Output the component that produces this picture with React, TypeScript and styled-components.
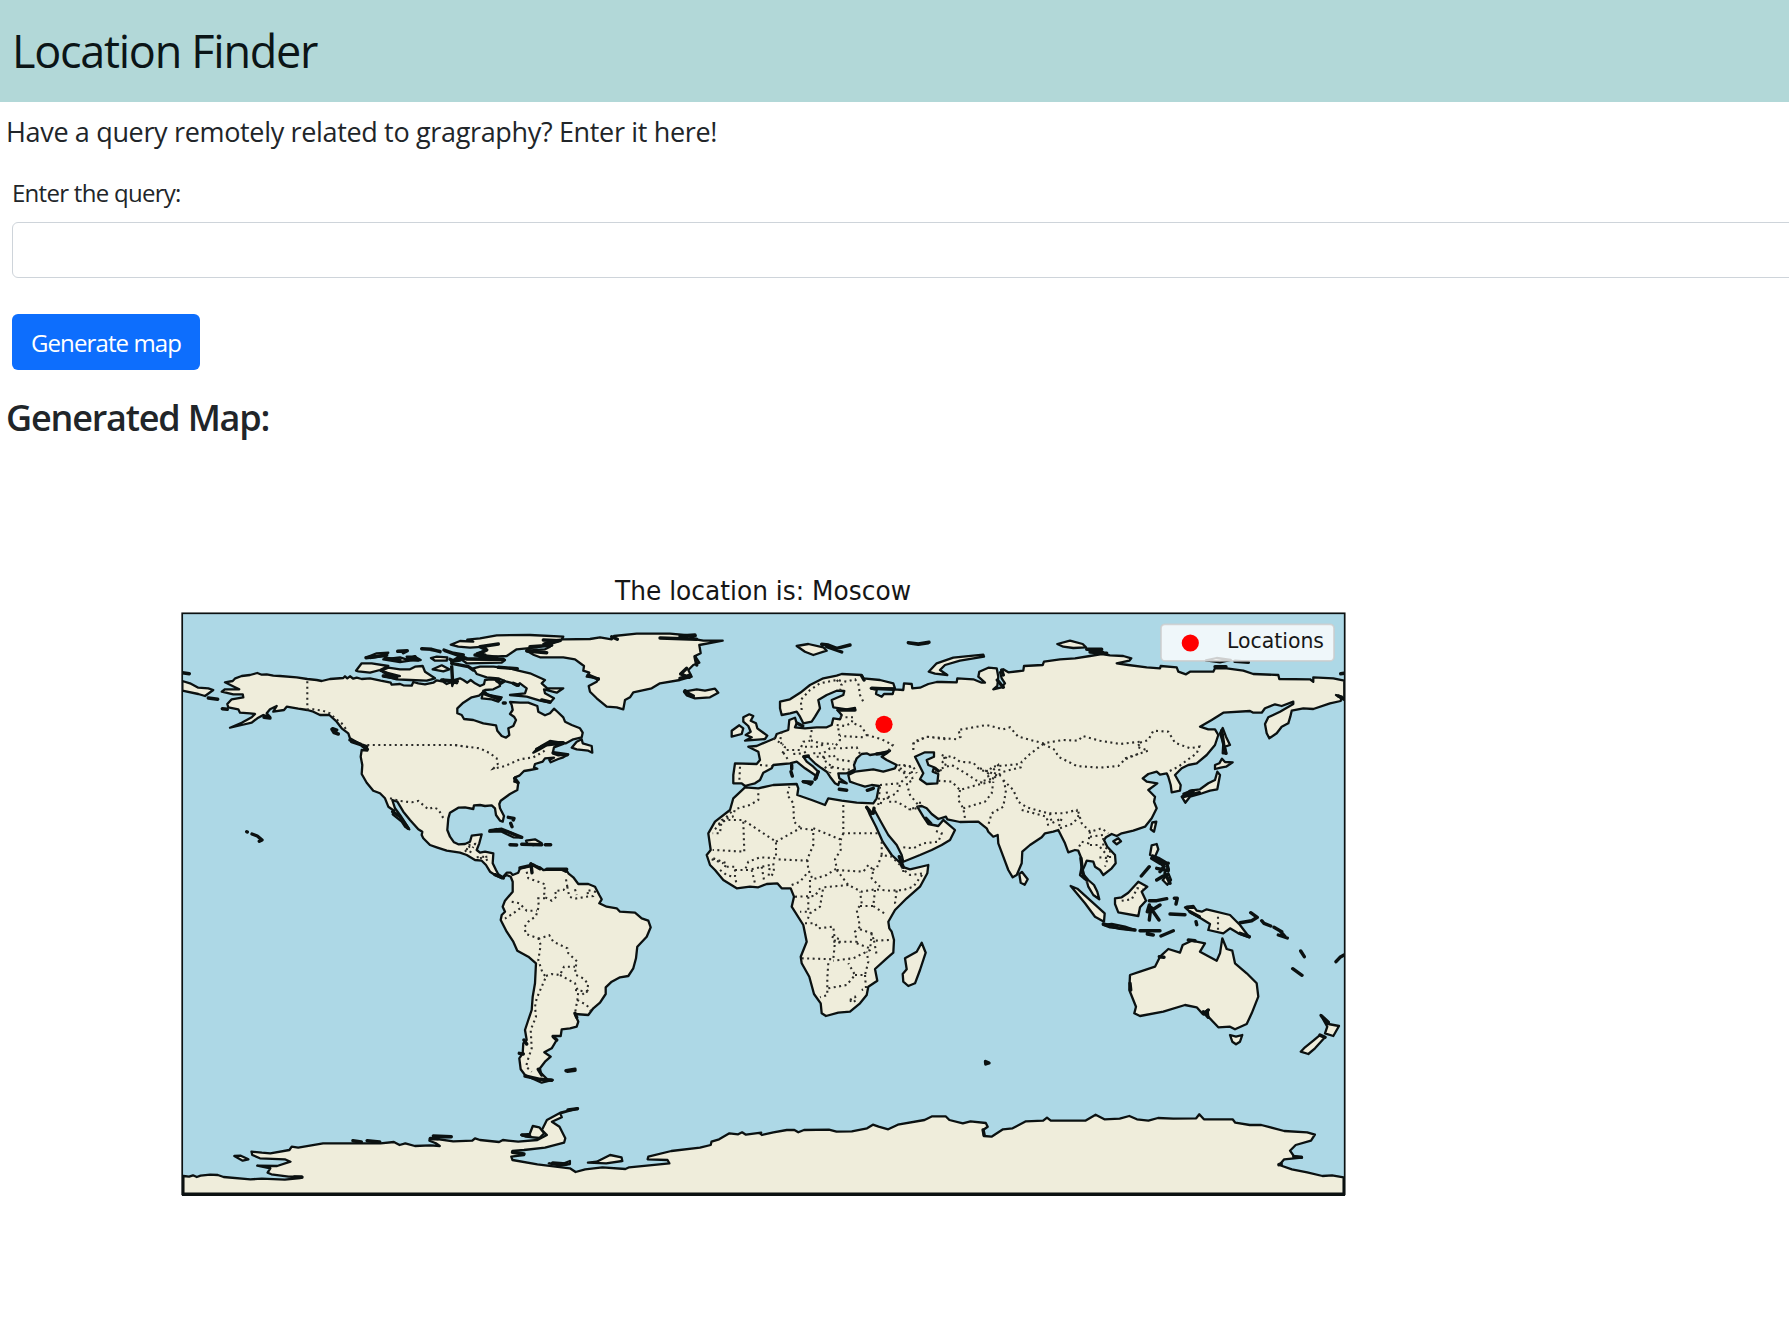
import React from "react";
import styled, { createGlobalStyle } from "styled-components";

const GlobalStyle = createGlobalStyle`
  *, *::before, *::after { box-sizing: border-box; }
  body {
    margin: 0;
    background: #fff;
    color: #212529;
    font-family: "Segoe UI", "Open Sans", "Noto Sans", sans-serif;
    overflow: hidden;
  }
`;

const Page = styled.main`
  display: flex;
  flex-direction: column;
  min-height: 1336px;
  overflow: hidden;
`;

const Header = styled.header`
  display: flex;
  align-items: center;
  height: 102px;
  padding: 0 12px;
  background: #b2d8d8;
`;

const Title = styled.h1`
  margin: 0;
  font-size: 45px;
  font-weight: 400;
  line-height: 54px;
  letter-spacing: -1.28px;
  color: #0b1517;
`;

const Lead = styled.p`
  margin: 10px 0 0 6px;
  font-size: 27px;
  line-height: 40px;
  letter-spacing: -0.34px;
`;

const QueryForm = styled.form`
  display: flex;
  flex-direction: column;
  align-items: flex-start;
  width: 1830px;
  padding: 23px 12px 0;
`;

const Label = styled.label`
  font-size: 24px;
  line-height: 36px;
  letter-spacing: -0.72px;
`;

const QueryInput = styled.input`
  width: 100%;
  height: 56px;
  margin-top: 11px;
  padding: 9px 18px;
  border: 1.5px solid #ced4da;
  border-radius: 6px;
  background: #fff;
  font: inherit;
  font-size: 24px;
`;

const SubmitButton = styled.button`
  width: 188px;
  height: 56px;
  margin-top: 36px;
  padding: 1px 0 0;
  border: 0;
  border-radius: 6px;
  background: #0d6efd;
  color: #fff;
  font-family: inherit;
  font-size: 24px;
  letter-spacing: -0.88px;
  white-space: nowrap;
`;

const SectionHeading = styled.h2`
  margin: 26px 0 0 6px;
  font-size: 36px;
  font-weight: 600;
  line-height: 43px;
  letter-spacing: -1.2px;
`;

const Figure = styled.figure`
  margin: 125px 0 0 160px;
`;

const MapSvg = styled.svg`
  display: block;
  text {
    font-family: "DejaVu Sans", sans-serif;
    fill: #161616;
  }
`;

const Coast = styled.path`
  fill: #efeddb;
  stroke: #0b1111;
  stroke-width: 2.3;
  stroke-linejoin: round;
`;
const Sea = styled(Coast)`
  fill: #add8e6;
`;
const Islet = styled.path`
  fill: none;
  stroke: #0b1111;
  stroke-width: 3.4;
  stroke-linecap: round;
  stroke-linejoin: round;
`;
const Border = styled.path`
  fill: none;
  stroke: #2b2b28;
  stroke-width: 2.1;
  stroke-dasharray: 2 3.5;
`;

/* The coastline is digitised in sheets, each with its own origin and scale. */
type Sheet = (points: string) => string;
const sheet =
  (ox: number, oy: number, sx = 3, sy = 3): Sheet =>
  (points) =>
    points
      .trim()
      .split(/\s+/)
      .map((p) => {
        const [x, y] = p.split(",").map(Number);
        return `${(ox + x / sx).toFixed(1)},${(oy + y / sy).toFixed(1)}`;
      })
      .join(" ");

const NW = sheet(170, 600);
const NA = sheet(430, 600);
const SA = sheet(460, 840);
const EU = sheet(680, 620);
const AF = sheet(690, 770);
const AS = sheet(860, 610);
const FE = sheet(1100, 600);
const OC = sheet(1060, 820);
const S1 = sheet(170, 1080, 2.6133);
const S2 = sheet(760, 1080, 2.6133);

const closed = (...parts: string[]) => `M${parts.join(" ")}Z`;
const shapes = (s: Sheet, list: string[]) => list.map((p) => `M${s(p)}Z`).join("");
const lines = (s: Sheet, list: string[]) => list.map((p) => `M${s(p)}`).join("");

const americas = closed(
  NW(`165,247 188,243 196,235 215,228 240,225 262,219 275,224 290,223 310,227 330,228 380,232 412,237 440,240 455,243 480,237 520,234
      525,229 532,235 540,229 550,236 560,233 575,237 600,235 632,242 662,248 665,254 690,252 700,256 725,257 730,246 745,250 765,253 790,248 800,241 820,245 830,252 845,246`),
  NA(`67,258 72,240 90,235 100,240 112,248 122,240 135,250 150,258 162,253 165,240 180,238 208,240 210,258 190,268 165,270
      155,280 147,287 125,292 100,308 82,325 82,340 95,345 102,357 130,360 160,370 198,376 202,392 215,408 228,413 238,405
      235,385 250,378 258,360 252,350 240,342 248,330 245,315 240,306 270,308 295,308 322,318 325,335 345,346 360,340 372,326 383,336 400,352
      405,365 425,375 450,385 458,398 455,412 430,418 408,430 360,423 335,437 318,450 310,458 330,448 350,436 385,432 400,432
      372,442 368,460 385,466 415,463 400,472 385,477 362,487 358,480 372,473 345,475 338,485 315,492 312,502 322,506 300,510 282,513 268,527 255,532 253,545
      265,548 262,570 240,582 212,602 208,612 210,625 222,648 218,665 210,662 198,645 195,625 185,616 165,618 150,615 132,616 130,627 105,622
      85,623 60,638 55,655 52,690 60,710 72,727 85,733 105,732 120,725 125,707 155,703 148,730 140,750 150,758 165,755 190,760`),
  SA(`100,42 98,70 108,90 115,103 128,112 140,98 152,98 158,105 175,98 180,85 210,78 212,70 225,78 240,82 250,90 275,88 318,88
      325,100 340,112 355,132 385,132 405,140 418,165 425,178 418,190 440,200 470,205 480,215 525,218 545,235 565,242 572,262
      560,290 532,320 528,355 520,385 505,408 480,412 455,425 437,442 437,462 420,488 400,505 385,525 345,522 355,545 350,560
      330,565 305,568 302,588 278,588 290,600 275,625 253,637 272,650 255,665 240,685 242,698 262,718 278,720 245,728 215,715
      195,705 182,688 178,655 188,640 190,610 200,600 195,570 205,540 215,510 218,470 225,430 228,370 205,350 172,332 160,305
      140,275 122,240 125,225 135,215 128,200 135,182 158,155 158,125 152,110 140,105 125,115 105,105 90,95 78,75 65,62 45,60 20,45 0,38`),
  NA(`70,755 50,752 20,742 0,735`),
  NW(`760,715 755,705 757,695 745,688 720,660 700,635 682,605 667,600 675,625 690,645 705,668 718,688 705,680 695,665 668,643 672,632
      655,620 645,595 630,580 610,572 590,548 575,522 577,495 572,470 575,450 592,452 570,432 540,415 535,400 515,385 500,365
      478,345 450,345 430,335 412,330 385,326 350,320 342,330 310,335 320,318 300,328 290,340 300,350 280,345 262,355 245,368
      215,375 180,383 215,368 245,352 255,342 240,340 210,338 205,328 175,322 172,312 185,298 220,292 218,283 190,283 155,275
      165,268 208,268 192,260`)
);

const afroEurasia = closed(
  EU(`300,245 330,238 365,215 390,195 430,175 470,167 485,162 545,165 550,175 600,180 640,190 645,205 625,205 572,205 590,210 588,222 605,230
      612,222 638,222 642,208 670,210 672,190 695,192 697,205 720,203 745,192 770,186`),
  AS(`245,216 290,217 292,205 340,208 365,218 375,218 355,200 358,185 385,173 410,175 415,200 412,228 400,238 425,232 435,220
      425,205 420,187 430,178 445,187 490,182 492,168 548,165 552,155 600,148 645,145 690,138 725,132`),
  FE(`30,166 70,168 94,175 88,182 50,190 85,195 140,202 180,205 182,198 230,202 235,215 258,223 270,215 340,215 345,205 380,205
      430,212 460,222 535,225 538,237 630,238 640,245 640,232 700,235 733,242 733,300 708,285 725,290 722,303 690,310 640,327
      610,325 575,332 571,350 565,370 545,380 530,400 508,415 500,400 495,372 505,352 540,335 580,312 580,305 545,318 525,313
      495,325 485,338 460,338 450,333 370,338 335,360 300,380 325,388 345,388 355,405 345,435 320,465 290,490 265,495 245,505
      225,525 242,555 240,572 215,577 212,555 205,530 200,520 180,524 170,515 145,522 128,535 140,545 172,550 145,570 165,590
      162,605 170,625 155,655 135,680 100,692 65,700 50,708 35,702 18,712`),
  OC(`132,60 142,80 165,105 167,130 155,145 130,165 120,150 105,140 100,125 80,122 75,135 68,150 72,165 85,180 102,195 112,215 118,238
      100,225 85,200 80,182 60,165 65,140 62,110 55,92 45,90 25,97 15,70`),
  AS(`605,680 595,660 580,665 555,670 545,682 510,705 487,725 485,760 470,795 458,802 445,780 430,740 415,700 413,675 400,680 385,665
      380,655 355,635 300,636 262,628 258,620 235,627 215,612 200,595 185,588 172,590 190,620 205,642 235,648 250,630 262,640
      285,660 270,690 245,705 215,720 180,735 130,755 125,735 110,705 85,675 65,640 45,603 35,612 20,592 30,615 48,650 68,695 95,735 120,758`),
  AF(`635,290 660,298 715,285 712,310 690,350 650,385 615,420 595,455 598,475 605,485 612,510 610,548 590,565 555,597 562,632 535,650 530,675
      510,700 480,725 445,728 408,738 395,730 392,700 372,672 358,620 335,580 332,560 350,515 340,465 305,410 312,380 302,355
      275,355 262,340 230,342 205,352 180,350 140,355 100,330 75,300 60,285 50,255 62,240 55,190 75,155 120,120 130,85 165,52
      205,55 250,45 320,42 325,55 322,75 365,90 405,105 415,85 455,92 500,98 550,100 560,85 567,48`),
  EU(`575,495 555,500 530,492 510,485 505,465 525,455 580,448 610,455 645,445 650,435 620,420 605,410 630,392 600,400 570,405
      560,400 545,402 530,415 522,435 525,448 500,460 475,460 478,475 500,490 478,485 475,495 465,490 450,470 440,455 425,445
      405,430 385,410 370,410 380,425 400,440 415,455 410,475 405,465 375,445 350,425 330,430 310,432 280,435 275,445 250,458
      240,480 225,490 205,495 195,498 185,490 160,490 160,465 165,430 230,432 240,420 235,395 205,380 230,378 260,365 285,355
      290,342 325,330 328,300 345,293 350,310 345,322 375,325 410,322 440,322 455,315 460,295 480,298 485,285 472,270 525,268 525,264 500,268
      460,262 455,240 490,225 493,213 470,212 440,225 415,240 420,265 405,290 395,305 370,310 360,290 350,275 330,280 305,285 300,265`)
);

const antarctica = closed(
  S1(`35,288 50,290 60,286 70,291 80,287 105,284 125,285 140,291 210,298 240,296 300,299 340,294 345,290 310,290 265,283 255,278 262,265
      228,257 280,258 315,245 300,238 235,235 215,225 213,215 240,218 262,220 312,210 318,200 335,203 400,190 450,190 500,190
      550,190 585,186 600,195 615,190 640,198 680,196 705,198 695,190 678,182 680,174 740,184 790,182 797,175 810,180 860,186
      870,180 910,185 960,180 985,165 972,150 985,120 1020,98 1065,85 1020,100 1024,112 998,125 1018,140 1033,175 1030,188
      980,203 925,210 895,213 925,225 892,230 895,240 960,253 1045,265 1060,276 1085,268 1130,262 1190,267 1200,262 1305,250
      1300,240 1248,238 1250,230 1310,213 1385,203 1413,195 1415,185 1435,178 1462,160 1485,163 1495,157 1505,164 1545,158`),
  S2(`0,160 5,165 35,157 70,150 90,150 100,157 115,150 180,149 200,155 240,154 280,145 295,134 310,140 335,148 360,134 430,120
      450,109 485,109 495,120 530,130 550,124 590,129 595,140 583,150 585,168 605,170 635,148 660,145 695,124 740,122 750,113
      760,122 850,122 877,104 900,118 940,116 965,108 985,118 1015,122 1040,114 1080,116 1140,115 1148,103 1160,118 1235,118
      1242,128 1280,135 1310,135 1370,153 1430,157 1450,164 1440,182 1400,195 1385,212 1395,228 1415,233 1370,238 1357,255 1390,268
      1430,277 1470,288 1495,286 1525,292 1525,341`),
  S1(`35,341`)
);

const islands = [
  shapes(NW, [
    "37,243 60,250 85,263 115,265 130,270 105,288 85,282 37,272",
    "558,212 575,190 605,190 655,198 630,210 600,218 565,214",
    "632,213 655,203 690,208 720,208 735,200 758,198 765,215 795,235 770,242 720,240 680,238 640,228 690,228",
    "590,172 620,160 655,158 640,168 600,174",
    "640,178 690,172 720,182 690,186",
    "710,170 735,170 752,180 720,182",
    "783,174 800,170 832,172 830,182 795,182",
    "788,208 815,196 838,208 820,214",
  ]),
  shapes(NA, [
    "290,152 345,148 360,140 340,132 365,122 400,118 480,117 510,112 545,118 552,108 620,101 720,101 797,108 780,115 820,122 878,122 808,135 812,160 795,168 808,188 790,195 775,210 785,230 750,240 690,250 665,265 610,277 600,292 585,300 580,328 560,322 530,320 500,295 480,275 476,258 500,245 506,235 470,230 478,218 460,212 462,198 435,178 400,172 330,172 312,165",
    "62,134 90,123 130,125 112,119 150,115 200,106 300,105 400,110 392,123 350,135 320,142 260,148 230,168 150,172 140,160 170,150 165,140 120,143 85,140",
    "85,172 110,178 225,180 215,188 110,190",
    "130,205 150,200 190,200 240,205 265,212 300,220 345,240 335,250 352,265 400,265 380,278 342,268 345,280 372,295 360,308 330,302 290,290 240,285 285,280 290,265 270,250 260,257 250,250 230,245 205,235 170,232 140,222",
    "160,272 175,285 215,292 205,305 185,298 155,295",
    "425,443 440,425 455,418 458,430 485,438 487,458 475,452 440,448",
    "178,695 200,687 240,697 275,713 250,712 215,695",
    "288,722 315,718 335,730 310,735 292,732",
  ]),
  shapes(EU, [
    "12,215 50,208 75,212 105,206 115,218 90,232 45,235 20,226",
    "190,292 208,283 220,288 212,302 228,310 232,325 262,347 255,357 195,362 215,352 197,345 212,335 205,318 190,305",
    "155,332 178,316 190,325 185,342 155,350",
    "350,78 385,72 430,82 440,92 400,105 375,95",
    "368,484 398,485 392,494",
  ]),
  shapes(AS, [
    "206,185 230,160 280,143 370,134 372,140 300,152 255,165 240,180 262,195 225,191",
    "592,102 630,92 668,102 678,112 640,114 610,110",
    "478,792 486,786 503,808 494,824 482,818",
  ]),
  shapes(FE, [
    "360,400 368,384 378,410 390,435 375,440 378,460 368,460 370,430",
    "358,490 366,476 375,486 398,487 378,500 362,503 345,507 345,495",
    "352,515 360,525 352,568 330,572 300,582 270,590 256,608 245,590 270,572 300,568 325,550 345,540",
    "152,688 157,667 169,665 162,695",
    "318,181 350,174 392,180 360,187",
  ]),
  shapes(OC, [
    "160,64 175,55 183,64 170,73",
    "275,76 290,72 295,88 285,110 270,105",
    "308,180 325,160 333,180 322,194",
    "165,235 185,232 205,218 235,185 262,200 245,215 258,242 240,262 235,288 175,277 165,252",
    "32,198 52,206 95,245 134,280 132,305 105,290 75,250",
    "130,315 155,312 195,320 225,330 150,322",
    "375,262 400,258 410,272 425,275 440,268 510,285 540,315 568,352 535,340 510,325 490,340 445,330 450,312 415,290 395,280",
    "210,465 240,455 285,440 300,410 325,387 360,398 368,375 395,362 435,370 420,395 470,422 480,400 487,355 500,387 517,392 525,430 560,460 590,490 595,530 575,580 560,612 525,628 510,620 475,622 445,590 443,570 428,582 410,562 375,555 310,575 240,588 223,580 228,560 208,510",
    "510,645 528,650 547,645 540,665 528,673 517,665",
    "782,585 805,612 837,618 820,648 795,640 802,620",
    "778,647 795,652 765,685 745,702 722,695 735,682 760,662",
  ]),
  shapes(AF, ["695,518 707,548 690,600 675,640 655,648 640,635 638,612 650,598 645,565 680,545"]),
  shapes(S1, [
    "168,228 185,227 205,238 190,242",
    "918,165 940,162 948,138 965,142 978,160 965,174 930,170",
    "1092,248 1115,245 1150,225 1180,232 1182,243 1140,250",
    "990,250 1025,252 1045,243 1045,252 1020,257",
  ]),
].join("");

const islets = [
  lines(NW, [
    "37,218 58,221", "115,294 143,298", "157,326 172,328", "282,352 300,354", "486,388 492,398 505,402", "488,386 500,390", "540,420 570,432 592,448", "545,425 590,440",
    "230,695 232,696", "246,702 262,708 276,720 268,724", "683,154 712,152 700,158", "755,146 785,148 810,155", "645,175 690,180", "720,176 745,180",
    "640,228 680,234", "660,225 640,215", "822,150 850,160 880,165", "845,185 870,180", "845,200 848,250", "820,240 860,248", "668,635 690,650 714,685", "588,173 650,165", "735,170 715,178",
  ]),
  lines(NA, [
    "0,148 30,154", "45,152 90,168 70,160 110,176", "110,176 220,178", "205,132 150,140 170,150 150,160 165,165", "90,170 70,182 60,178", "135,165 200,172",
    "340,120 385,122 345,132 365,136 300,140", "290,153 350,158", "690,114 800,118", "545,110 562,118", "770,205 752,222 778,232", "795,170 800,195", "475,225 505,238",
    "205,202 262,206", "220,309 226,309", "235,652 252,655 250,660", "242,670 246,680", "240,734 260,735", "275,733 335,734", "346,734 362,734",
    "270,804 310,795 330,806", "350,808 410,808", "160,280 210,298", "335,300 360,306", "65,190 115,200 130,210", "35,240 82,244", "320,448 360,428 400,428", "370,458 412,464", "254,535 264,548", "765,272 780,284",
    "180,692 215,688 275,712", "200,242 212,250 222,244", "250,250 265,256",
  ]),
  lines(SA, ["213,72 216,98", "305,88 318,94", "192,600 200,612", "318,692 345,688", "322,694 345,691", "195,708 240,718 275,721", "235,688 245,705", "105,104 130,114", "345,520 350,532", "280,590 290,600", "178,640 190,642"]),
  lines(EU, [
    "425,73 445,75 470,85 510,75", "440,80 485,96", "685,68 715,73 745,68", "335,435 335,447", "333,455 337,468", "370,485 395,488", "478,508 500,511", "562,511 580,505",
    "0,48 45,45", "0,175 30,165", "15,215 40,228", "352,310 368,318", "475,270 525,270", "575,205 640,208", "415,455 405,478", "372,410 385,408", "590,402 620,398", "560,562 575,580", "582,565 580,580", "545,168 552,180",
  ]),
  lines(AS, ["145,98 175,102 207,97", "680,118 725,118", "690,126 740,130", "425,180 430,195", "412,210 430,232", "225,475 235,483", "198,625 212,640", "118,740 130,772", "663,745 668,790 675,805"]),
  lines(FE, [
    "345,200 378,200", "405,184 445,187", "722,221 733,220", "148,800 124,828", "158,768 175,775 200,790 205,808", "178,785 192,800 180,815", "170,840 190,828", "185,808 205,812", "195,820 210,850",
    "250,590 298,578", "252,582 280,572", "365,392 372,440 378,460", "715,288 728,295", "0,152 10,158",
  ]),
  lines(OC, [
    "268,242 290,242 320,236", "268,255 262,275", "268,258 280,268 300,255", "272,265 268,300", "280,275 297,300", "343,235 352,235 348,252", "330,282 375,284", "240,332 300,332", "262,342 280,345",
    "303,348 340,332", "408,305 410,314", "380,262 400,262", "390,275 418,290", "540,308 575,302 592,292 572,278", "605,302 612,310 632,318", "642,322 665,335", "655,345 682,354", "662,335 675,350",
    "722,393 733,410", "698,446 726,466", "852,405 840,412 828,425", "784,587 805,607", "430,575 445,592", "445,570 432,582", "298,410 312,412", "540,340 568,350",
    "130,312 180,325 225,330", "275,115 300,130 325,130", "290,145 315,150", "210,490 212,510", "385,360 405,362", "780,645 795,652",
  ]),
  lines(S1, ["478,182 500,186", "515,182 548,186", "688,168 735,170", "895,217 925,222", "325,291 345,292", "1000,249 1035,252", "1040,90 1065,86", "680,176 700,176", "920,165 940,167"]),
  lines(S2, ["583,150 586,166", "1395,230 1415,232", "1356,254 1362,252"]),
].join("");

const borders = [
  lines(NW, ["412,244 412,328 430,328 458,332 480,340 495,355 515,370 530,390", "592,435 855,435 900,442", "660,595 690,603 725,607 745,603 775,628 790,622 805,628 822,658"]),
  lines(NA, ["75,436 150,445 180,460 200,475 203,492 190,506 225,498 270,478 310,472 340,455 350,445", "110,750 115,735 135,732 132,745", "150,775 170,770 182,768", "120,758 130,740"]),
  lines(SA, [
    "200,95 205,115 235,125 255,133 252,170 275,182 290,170 285,153 310,150 322,140 318,118", "322,140 328,170 345,176 380,170 400,168 405,155 382,150 385,172",
    "345,148 350,165", "255,175 235,175 236,200 228,228 205,245 193,262 198,282 235,295 242,315 235,360 248,400 258,410 245,440 230,475 225,500 228,530 212,570 215,625 205,655 198,680 215,695",
    "155,185 178,190 200,212 230,212", "180,205 160,220 135,236", "235,297 268,286 280,305 322,325 325,340 352,365 345,385 348,405 370,415 385,432 380,455 345,450",
    "258,408 275,402 300,405 312,380 345,380", "300,405 345,430 355,455 352,480 345,520", "352,480 380,495 392,512", "385,450 365,465",
    "15,35 28,20 38,12", "50,52 75,50 82,62",
  ]),
  lines(EU, [
    "365,270 362,240 390,210 420,190 470,180 500,185 525,178 535,190 540,225 550,245", "470,180 485,195 480,212", "480,292 520,292 515,308 545,320 560,345 550,352 480,348",
    "470,315 495,318 515,308", "475,325 480,360 465,380", "480,385 530,382 540,402", "560,345 605,358 638,375 625,392", "395,330 390,360 420,370 460,372",
    "305,335 300,365 315,382 305,405", "280,355 310,375", "320,390 360,390 370,365 390,362", "375,380 420,380 435,368", "340,402 370,400 385,390", "400,400 430,400 450,385 475,385",
    "410,410 430,410 440,430 460,440", "430,415 460,405 470,418", "470,418 520,425", "455,440 500,450 520,445", "455,440 450,460", "435,440 445,455",
    "240,435 275,438", "180,440 178,485", "310,398 325,420", "700,390 700,370 740,350 800,358", "600,495 660,490 680,470 655,435 690,440 700,470", "655,450 690,460 700,480 680,490",
    "680,490 690,525 715,555", "660,495 650,520 605,540 600,560", "620,515 625,545 650,545 690,568 710,565", "600,500 595,555",
    "785,405 800,410 785,430 800,435",
  ]),
  lines(AF, [
    "205,70 205,90 180,105 135,118 128,140 95,150 90,190 68,190", "85,162 110,150 160,150 258,215 258,265 210,262 175,275 165,300", "160,155 163,245 75,240 68,240", "258,215 330,175 370,180 370,225 350,272 258,268",
    "330,172 312,155 310,100 292,75 298,50", "370,175 450,208 452,240 435,268 440,295 410,315 368,328 355,300 352,268", "460,105 460,190 570,190", "460,190 452,210",
    "440,300 520,305 535,285 550,300 545,325 570,350", "440,300 475,345 515,365 555,358 600,362 640,360 670,350 700,310 660,315 635,295", "620,362 615,400 620,410",
    "575,215 575,255 605,260 635,290", "575,255 560,295 545,300", "475,345 400,352 390,410 360,430 350,455", "315,380 375,378 390,355", "355,380 355,425 330,425",
    "305,345 330,335 355,305", "360,330 360,375", "345,460 375,460 385,475 430,470 435,515 430,568 335,565", "430,515 500,515 495,485 510,470 500,420 515,400 510,365",
    "510,408 550,408 555,360", "550,408 590,435", "510,478 545,490 552,512 600,510", "545,490 540,540 490,565 430,572", "552,512 560,555", "500,520 540,535",
    "415,580 412,625 412,675 390,682", "415,655 470,645 495,615 475,580", "495,615 525,615 535,575 530,545", "525,615 528,655 515,660", "480,690 495,680 500,690 485,698 480,690",
    "70,265 110,280 100,300", "65,268 100,280", "110,290 135,290 135,320 140,345", "90,300 110,315 130,320", "135,300 185,300 195,340", "185,298 215,290 240,285 235,325", "215,290 222,330", "250,280 252,305 240,325", "75,178 110,140 130,120",
    "640,232 670,235 700,220 745,215 755,190 730,180", "425,500 450,508 445,530", "640,300 640,315",
  ]),
  lines(AS, [
    "160,420 162,395 200,380 290,388 302,380 295,360 380,345 430,358 450,352 475,380 550,400 610,390 655,392 668,378 720,392 780,402 840,395",
    "550,402 585,420 595,440 650,468 720,473 775,468 795,448 840,430", "550,402 510,432 485,455 482,472 430,485 400,505 360,515", "250,445 275,438 300,455 340,458 355,475 385,490 395,470 480,462",
    "245,475 275,465 320,492 355,515 375,520", "235,512 275,515 300,540 350,525 395,515 405,490 430,500", "300,540 295,570 310,595 315,625", "310,595 375,575 395,550 400,515",
    "430,510 438,540 430,590 395,610 385,645", "430,510 460,540 475,575 500,592 565,610 610,610 650,600 655,620 640,640 600,655", "485,600 560,620 565,650", "570,610 575,640 605,625 595,655",
    "655,605 665,640 690,665 725,655 745,670", "690,665 685,700 665,695 655,715", "690,680 730,675 730,710 750,720 750,745 715,742", "690,705 715,705 745,740 735,770", "245,480 225,485", "360,475 420,500", "380,480 390,520", "400,480 415,465 420,490",
    "180,575 180,590 145,598", "130,465 160,470 170,490",
  ]),
  lines(FE, ["120,428 145,420 160,392 205,395 225,428 270,445 298,440 290,460 262,480 235,500 205,515", "75,475 145,452 110,440 125,428"]),
  lines(OC, ["185,242 215,238 232,205 248,208", "474,290 474,332", "78,185 90,190"]),
].join("");

function WorldMap() {
  return (
    <MapSvg width="1200" height="650" viewBox="160 564 1200 650" role="img" aria-label="World map">
      <defs>
        <clipPath id="frame">
          <rect x="182.2" y="613.5" width="1162.5" height="581.5" />
        </clipPath>
      </defs>
      <text x="615" y="600.3" fontSize="26.6" textLength="296" lengthAdjust="spacingAndGlyphs">
        The location is: Moscow
      </text>
      <rect x="182.2" y="613.3" width="1162.5" height="581" fill="#add8e6" />
      <g clipPath="url(#frame)">
        <Coast d={americas} />
        <Coast d={afroEurasia} />
        <Coast d={antarctica} />
        <Coast d={islands} />
        <Sea d={shapes(AS, ["165,440 195,427 222,427 222,440 200,450 205,465 222,472 218,485 235,492 232,520 200,522 180,508 190,490 175,460"])} />
        <Islet d={islets} />
        <Border d={borders} />
      </g>
      <Islet d="M985.5,1061.5 L989,1063 L985.8,1064 Z" />
      <rect x="182.2" y="613.3" width="1162.5" height="581" fill="none" stroke="#0b1111" strokeWidth="1.7" />
      <path d="M182 1194.5H1345" stroke="#0b1111" strokeWidth="2.8" />
      <circle cx="884" cy="724.3" r="8.6" fill="#f00" />
      <rect x="1161" y="624.3" width="173" height="36.6" rx="4" fill="#fff" fillOpacity=".8" stroke="#ccc" strokeOpacity=".8" strokeWidth="1.8" />
      <circle cx="1190.3" cy="643" r="8.6" fill="#f00" />
      <text x="1227" y="648.3" fontSize="20.6" textLength="97" lengthAdjust="spacingAndGlyphs">
        Locations
      </text>
    </MapSvg>
  );
}

export default function App() {
  return (
    <>
      <GlobalStyle />
      <Page>
        <Header>
          <Title>Location Finder</Title>
        </Header>
        <Lead>Have a query remotely related to gragraphy? Enter it here!</Lead>
        <QueryForm onSubmit={(e) => e.preventDefault()}>
          <Label htmlFor="query">Enter the query:</Label>
          <QueryInput id="query" type="text" />
          <SubmitButton type="submit">Generate map</SubmitButton>
        </QueryForm>
        <SectionHeading>Generated Map:</SectionHeading>
        <Figure>
          <WorldMap />
        </Figure>
      </Page>
    </>
  );
}
